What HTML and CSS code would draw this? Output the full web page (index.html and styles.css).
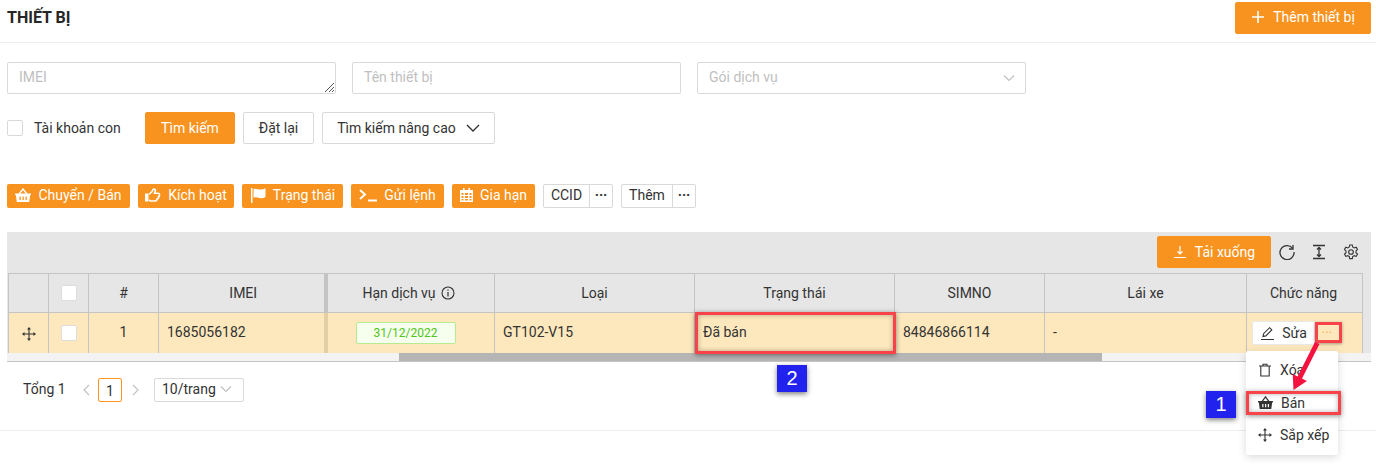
FILE: index.html
```html
<!DOCTYPE html>
<html lang="en">
<head>
  <meta charset="UTF-8">
  <meta name="viewport" content="width=device-width, initial-scale=1.0">
  <title>Thiết bị</title>
  <link rel="stylesheet" href="styles.css">
</head>
<body>
  <div class="page">
    <header class="top-bar">
      <h1 class="page-title">THIẾT BỊ</h1>
      <button class="btn btn-primary btn-add">
        <svg class="ico" width="14" height="14" viewBox="0 0 14 14"><path d="M7 1v12M1 7h12" stroke="#fff" stroke-width="1.6" fill="none"/></svg>
        <span>Thêm thiết bị</span>
      </button>
    </header>

    <section class="filters">
      <div class="field field-area">IMEI
        <svg class="grip" width="9" height="9" viewBox="0 0 9 9"><path d="M0 9L9 0M4 9L9 4M7 9L9 7" stroke="#555" stroke-width="1" fill="none"/></svg>
      </div>
      <div class="field">Tên thiết bị</div>
      <div class="field field-select">Gói dịch vụ
        <svg width="12" height="8" viewBox="0 0 12 8"><path d="M1 1.5l5 5 5-5" stroke="#bfbfbf" stroke-width="1.1" fill="none"/></svg>
      </div>
    </section>

    <section class="search-row">
      <span class="check"></span>
      <span class="check-label">Tài khoản con</span>
      <button class="btn btn-primary btn-search">Tìm kiếm</button>
      <button class="btn btn-reset">Đặt lại</button>
      <button class="btn btn-more">Tìm kiếm nâng cao
        <svg width="14" height="9" viewBox="0 0 14 9"><path d="M1 1l6 6 6-6" stroke="#333" stroke-width="1.4" fill="none"/></svg>
      </button>
    </section>

    <section class="actions">
      <button class="btn-act w-sell">
        <svg width="16" height="14" viewBox="0 0 16 14"><path fill="none" stroke="#fff" stroke-width="1.4" d="M3.800 6.500L8 1l4.200 5.500"/><path fill="#fff" fill-rule="evenodd" d="M0 5.500h16V7h-.8l-1 7H1.800l-1-7H0zM4.500 8.500v3.500h1.300V8.500zm3 0v3.500h1.300V8.500zm3 0v3.500h1.300V8.500z"/></svg>
        Chuyển / Bán</button>
      <button class="btn-act w-active">
        <svg width="16" height="14" viewBox="0 0 16 14"><path fill="#fff" d="M0 5.500h3.500V13.500H0z"/><path fill="none" stroke="#fff" stroke-width="1.600" d="M4 6.500L7 3.500 8 1.500C9.500.5 11 1.500 10 4L9.500 5.300H13C15 5.300 15 8.300 13.500 8.600 14 10 13 11 12 11 12 12.300 11 13 10 13H5.500L4 12"/></svg>
        Kích hoạt</button>
      <button class="btn-act w-status">
        <svg width="16" height="15" viewBox="0 0 16 15"><path fill="#fff" d="M1 0h1.500v15H1zM3.500 1c3-1.200 5 1 8 .5 1.500-.2 3-.8 4-1.200v8.700c-2 1.200-4 1.500-6 1-2-.6-4-1-6-.2z"/></svg>
        Trạng thái</button>
      <button class="btn-act w-cmd">
        <svg width="18" height="13" viewBox="0 0 18 13"><path fill="none" stroke="#fff" stroke-width="2" d="M1 1l5 4.500L1 10M9 11.500h9"/></svg>
        Gửi lệnh</button>
      <button class="btn-act w-renew">
        <svg width="13" height="14" viewBox="0 0 13 14"><path fill="#fff" fill-rule="evenodd" d="M3 0h1.500v2h4V0H10v2h3v12H0V2h3zM1.500 5v2h2V5zm3.500 0v2h3V5zm4.500 0v2h2V5zM1.500 8v2h2V8zM5 8v2h3V8zm4.500 0v2h2V8zM1.500 11v1.500h2V11zM5 11v1.500h3V11zm4.500 0v1.500h2V11z"/></svg>
        Gia hạn</button>
      <div class="split w-ccid"><span class="split-main">CCID</span><span class="split-dots">···</span></div>
      <div class="split w-them"><span class="split-main">Thêm</span><span class="split-dots">···</span></div>
    </section>

    <section class="grid-box">
      <div class="grid-tools">
        <button class="btn btn-primary btn-download">
          <svg width="14" height="14" viewBox="0 0 14 14"><path d="M7 1v8M4.500 6.500L7 9l2.500-2.500M1 12.500h12" stroke="#fff" stroke-width="1.200" fill="none"/></svg>
          Tải xuống</button>
        <svg class="tool" width="16" height="16" viewBox="0 0 16 16"><path d="M13.500 4.200A7 7 0 1 0 15 8" stroke="#333" stroke-width="1.300" fill="none"/><path d="M14 1v4h-4" stroke="#333" stroke-width="1.300" fill="none"/></svg>
        <svg class="tool" width="16" height="16" viewBox="0 0 16 16"><path d="M2 1.500h12M2 14.500h12M8 3.500v9M6 5.500l2-2 2 2M6 10.500l2 2 2-2" stroke="#333" stroke-width="1.300" fill="none"/></svg>
        <svg class="tool" width="16" height="16" viewBox="0 0 16 16"><path d="M6.700 1h2.600l.4 2 1.500.9 2-.7 1.300 2.300-1.500 1.400v1.800l1.500 1.400-1.300 2.300-2-.7-1.500.9-.4 2H6.700l-.4-2-1.500-.9-2 .7-1.300-2.300 1.500-1.400V7.100L1.500 5.500l1.300-2.300 2 .7 1.500-.9z" stroke="#333" stroke-width="1.100" fill="none"/><circle cx="8" cy="8" r="2.300" stroke="#333" stroke-width="1.100" fill="none"/></svg>
      </div>

      <div class="grid-scroll">
        <table class="grid">
          <colgroup>
            <col class="c-drag"><col class="c-check"><col class="c-num"><col class="c-imei"><col class="c-exp"><col class="c-type"><col class="c-status"><col class="c-sim"><col class="c-driver"><col class="c-fn">
          </colgroup>
          <thead>
            <tr>
              <th></th>
              <th><span class="check check-white"></span></th>
              <th>#</th>
              <th class="fixed-edge th-imei">IMEI</th>
              <th class="th-exp">Hạn dịch vụ
                <svg class="info" width="14" height="14" viewBox="0 0 14 14"><circle cx="7" cy="7" r="6" stroke="#333" stroke-width="1.100" fill="none"/><path d="M7 6v4.500M7 3.500v1.300" stroke="#333" stroke-width="1.200"/></svg>
              </th>
              <th>Loại</th>
              <th>Trạng thái</th>
              <th>SIMNO</th>
              <th>Lái xe</th>
              <th class="th-fn">Chức năng</th>
            </tr>
          </thead>
          <tbody>
            <tr>
              <td class="center">
                <svg width="14" height="14" viewBox="0 0 14 14"><path d="M7 1v12M1 7h12" stroke="#333" stroke-width="1.100"/><path fill="#333" d="M7 0l2 2.500H5zM7 14l2-2.500H5zM0 7l2.500-2v4zM14 7l-2.500-2v4z"/></svg>
              </td>
              <td class="center"><span class="check check-white"></span></td>
              <td class="center txt">1</td>
              <td class="fixed-edge txt">1685056182</td>
              <td><span class="date-tag">31/12/2022</span></td>
              <td class="txt">GT102-V15</td>
              <td class="txt">Đã bán</td>
              <td class="txt">84846866114</td>
              <td class="txt">-</td>
              <td>
                <div class="row-fn">
                  <button class="btn-edit">
                    <svg width="15" height="14" viewBox="0 0 15 14"><path d="M1 13.500h13M3 10.500l.6-2.800 6-6 2.200 2.200-6 6z" stroke="#333" stroke-width="1.100" fill="none"/></svg>
                    Sửa</button>
                  <span class="btn-dots">···</span>
                </div>
              </td>
            </tr>
          </tbody>
        </table>
        <div class="scrollbar"><div class="scrollbar-thumb"></div></div>
      </div>
    </section>

    <section class="pager">
      <span class="pager-total">Tổng 1</span>
      <svg width="8" height="12" viewBox="0 0 8 12"><path d="M7 1L2 6l5 5" stroke="#bfbfbf" stroke-width="1.100" fill="none"/></svg>
      <span class="pager-page">1</span>
      <svg width="8" height="12" viewBox="0 0 8 12"><path d="M1 1l5 5-5 5" stroke="#bfbfbf" stroke-width="1.100" fill="none"/></svg>
      <span class="pager-size">10/trang
        <svg width="12" height="8" viewBox="0 0 12 8"><path d="M1 1.500l5 5 5-5" stroke="#bfbfbf" stroke-width="1.100" fill="none"/></svg>
      </span>
    </section>

    <div class="page-end"></div>

    <!-- row menu, lies over the table -->
    <ul class="menu">
      <li>
        <svg width="14" height="14" viewBox="0 0 14 14"><path d="M1 3h12M5 3V1.200h4V3M2.800 3v10h8.400V3" stroke="#333" stroke-width="1.100" fill="none"/></svg>
        Xóa</li>
      <li>
        <svg width="15" height="13" viewBox="0 0 16 14"><path fill="none" stroke="#333" stroke-width="1.400" d="M3.800 6.500L8 1l4.200 5.500"/><path fill="#333" fill-rule="evenodd" d="M0 5.500h16V7h-.8l-1 7H1.800l-1-7H0zM4.500 8.500v3.500h1.300V8.500zm3 0v3.500h1.300V8.500zm3 0v3.500h1.300V8.500z"/></svg>
        Bán</li>
      <li>
        <svg width="14" height="14" viewBox="0 0 14 14"><path d="M7 1v12M1 7h12" stroke="#333" stroke-width="1.100"/><path fill="#333" d="M7 0l2 2.500H5zM7 14l2-2.500H5zM0 7l2.500-2v4zM14 7l-2.500-2v4z"/></svg>
        Sắp xếp</li>
    </ul>

    <!-- annotations drawn on top of the screenshot -->
    <div class="mark mark-status"></div>
    <div class="mark mark-dots"></div>
    <div class="mark mark-sell"></div>
    <div class="badge badge-1">1</div>
    <div class="badge badge-2">2</div>
    <svg class="arrow" width="40" height="55" viewBox="0 0 40 55"><path d="M28 2l4.500 2L15 38.600l4.900 2.500-13.400 8.900-.8-16.100 4.900 2.500z" fill="#f4123f"/></svg>
  </div>
</body>
</html>
```

FILE: styles.css
```css
* {
  box-sizing: border-box;
}
body {
  margin: 0;
  font-family: Roboto, "Liberation Sans", sans-serif;
  font-size: 14px;
  color: #333;
  background-color: #fff;
}
button {
  font: inherit;
  cursor: pointer;
}
svg {
  flex: none;
}
.page {
  position: relative;
  width: 1376px;
  height: 467px;
  overflow: hidden;
}

/* top */
.top-bar {
  display: flex;
  justify-content: space-between;
  align-items: flex-start;
  height: 43px;
  padding: 2px 5px 0 7px;
  border-bottom: 1px solid #eee;
}
.page-title {
  margin: 6px 0 0;
  font-size: 16px;
  font-weight: 700;
  line-height: 20px;
  color: #262626;
}
.btn {
  display: flex;
  align-items: center;
  justify-content: center;
  height: 32px;
  border: 1px solid #d9d9d9;
  border-radius: 2px;
  background-color: #fff;
  color: #333;
  padding: 0;
}
.btn-primary {
  border-color: #f7931e;
  background-color: #f7931e;
  color: #fff;
}
.btn-add {
  width: 136px;
  gap: 8px;
  padding-bottom: 2px;
}

/* filters */
.filters {
  display: flex;
  gap: 16px;
  padding: 19px 0 0 7px;
}
.field {
  position: relative;
  display: flex;
  align-items: center;
  justify-content: space-between;
  width: 329px;
  height: 32px;
  padding: 0 11px 2px;
  border: 1px solid #d9d9d9;
  border-radius: 2px;
  color: #bfbfbf;
}
.field-area {
  align-items: flex-start;
  padding-top: 6px;
}
.grip {
  position: absolute;
  right: 1px;
  bottom: 1px;
}
.field-select {
  padding-right: 10px;
}
.field-select svg {
  margin-top: 2px;
}
.search-row {
  display: flex;
  align-items: center;
  padding: 18px 0 0 7px;
}
.check {
  display: block;
  width: 16px;
  height: 16px;
  border: 1px solid #d9d9d9;
  border-radius: 2px;
  background-color: #fff;
}
.check-label {
  width: 111px;
  margin-left: 11px;
}
.btn-search {
  width: 90px;
  margin-right: 8px;
}
.btn-reset {
  width: 71px;
  margin-right: 8px;
}
.btn-more {
  width: 173px;
  gap: 10px;
}

/* action buttons */
.actions {
  display: flex;
  gap: 8px;
  padding: 40px 0 0 7px;
}
.btn-act {
  display: flex;
  align-items: center;
  justify-content: center;
  gap: 7px;
  height: 24px;
  padding: 0 0 2px;
  border: 0;
  border-radius: 2px;
  background-color: #f7931e;
  color: #fff;
}
.w-sell { width: 123px; }
.w-active { width: 96px; }
.w-status { width: 101px; }
.w-cmd { width: 93px; }
.w-renew { width: 83px; }
.split {
  display: flex;
  height: 24px;
  border: 1px solid #d9d9d9;
  border-radius: 2px;
  line-height: 20px;
}
.w-ccid { width: 70px; }
.w-them { width: 75px; }
.split-main {
  flex: 1;
  text-align: center;
}
.split-dots {
  width: 23px;
  border-left: 1px solid #d9d9d9;
  text-align: center;
  font-weight: 700;
}

/* table */
.grid-box {
  margin: 24px 5px 0 7px;
  background-color: #e6e6e6;
}
.grid-tools {
  display: flex;
  align-items: center;
  justify-content: flex-end;
  height: 41px;
  padding: 4px 12px 5px 0;
}
.btn-download {
  width: 114px;
  gap: 8px;
  margin-right: 8px;
}
.tool + .tool {
  margin-left: 16px;
}
.grid-scroll {
  border-bottom: 1px solid #c4c4c4;
}
.grid {
  width: 1354px;
  margin-left: 1px;
  table-layout: fixed;
  border-collapse: collapse;
}
.c-drag, .c-check { width: 40px; }
.c-num { width: 70px; }
.c-imei { width: 167px; }
.c-exp { width: 169px; }
.c-type, .c-status { width: 200px; }
.c-sim { width: 150px; }
.c-driver { width: 202px; }
.c-fn { width: 116px; }
th, td {
  padding: 0 8px;
  border: 1px solid #c4c4c4;
  font-weight: 400;
  text-align: left;
}
th {
  height: 39px;
  background-color: #e6e6e6;
  text-align: center;
}
.th-imei {
  padding-left: 12px;
}
.th-exp {
  padding-right: 12px;
}
.th-fn {
  padding-right: 10px;
}
td {
  height: 40px;
  background-color: #fde8bd;
  border-bottom: 0;
}
td.txt {
  padding-bottom: 2px;
}
.center {
  text-align: center;
}
.center svg {
  vertical-align: middle;
}
th .check, td .check {
  margin: 0 auto;
}
.check-white {
  border-color: #ddd;
}
.fixed-edge {
  border-right: 4px solid #c4c4c4;
}
td.fixed-edge {
  border-right-color: #e3cfa6;
}
.info {
  vertical-align: -2px;
  margin-left: 2px;
}
.date-tag {
  display: block;
  width: 100px;
  height: 22px;
  margin-left: 20px;
  border: 1px solid #b7eb8f;
  border-radius: 2px;
  background-color: #f6ffed;
  color: #52c41a;
  font-size: 12px;
  line-height: 20px;
  text-align: center;
}
.row-fn {
  display: flex;
  align-items: center;
  margin-left: -3px;
}
.btn-edit {
  display: flex;
  align-items: center;
  justify-content: center;
  gap: 7px;
  width: 63px;
  height: 24px;
  padding: 0;
  border: 1px solid #e8e8e8;
  border-radius: 2px;
  background-color: #fff;
  color: #333;
}
.btn-dots {
  width: 24px;
  text-align: center;
  color: #f9b45e;
}
.scrollbar {
  height: 8px;
  background-color: #f3f3f3;
}
.scrollbar-thumb {
  width: 703px;
  height: 8px;
  margin-left: 392px;
  background-color: #b5b5b5;
}

/* pagination */
.pager {
  display: flex;
  align-items: center;
  height: 24px;
  margin-top: 16px;
  padding-left: 23px;
}
.pager-total {
  width: 59px;
  padding-bottom: 2px;
}
.pager-page {
  width: 24px;
  height: 24px;
  margin: 0 10px 0 8px;
  border: 1px solid #f7931e;
  border-radius: 2px;
  line-height: 24px;
  text-align: center;
}
.pager-size {
  display: flex;
  align-items: center;
  justify-content: space-between;
  width: 90px;
  height: 24px;
  margin-left: 14px;
  padding: 0 11px 2px 7px;
  border: 1px solid #d9d9d9;
  border-radius: 2px;
}
.page-end {
  margin-top: 28px;
  border-top: 1px solid #eee;
}

/* dropdown */
.menu {
  position: absolute;
  left: 1246px;
  top: 351px;
  width: 92px;
  height: 104px;
  margin: 0;
  padding: 3px 0 0;
  list-style: none;
  border-radius: 2px;
  background-color: #fff;
  box-shadow: 0 2px 8px rgba(0, 0, 0, 0.15);
}
.menu li {
  display: flex;
  align-items: center;
  gap: 8px;
  height: 32.5px;
  padding-left: 12px;
}

/* annotations */
.mark {
  position: absolute;
  border: 3px solid #f9434b;
  box-shadow: 0 1px 5px rgba(0, 0, 0, 0.45), inset 0 0 5px rgba(0, 0, 0, 0.3);
}
.mark-status {
  left: 695px;
  top: 312px;
  width: 201px;
  height: 42px;
}
.mark-dots {
  left: 1315px;
  top: 322px;
  width: 27px;
  height: 21px;
  box-shadow: 0 1px 3px rgba(0, 0, 0, 0.35);
}
.mark-sell {
  left: 1246px;
  top: 391px;
  width: 95px;
  height: 24px;
}
.badge {
  position: absolute;
  width: 30px;
  height: 27px;
  background-color: #2222ee;
  color: #fff;
  font-family: "Liberation Sans", sans-serif;
  font-size: 20px;
  line-height: 27px;
  text-align: center;
  box-shadow: 0 2px 5px rgba(0, 0, 0, 0.5);
}
.badge-1 {
  left: 1206px;
  top: 391px;
}
.badge-2 {
  left: 777px;
  top: 365px;
}
.arrow {
  position: absolute;
  left: 1287px;
  top: 340px;
}
```
